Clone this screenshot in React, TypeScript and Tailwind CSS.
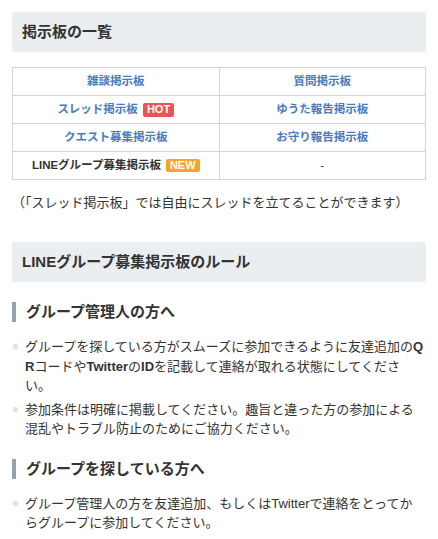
import React from "react";

const font = { fontFamily: '"Liberation Sans", "Noto Sans CJK JP", sans-serif' };

function Heading({ children }: { children: React.ReactNode }) {
  return (
    <div className="h-[40px] flex items-center pl-[10px] bg-[#ebeef1] rounded-[2px] text-[15px] font-bold text-[#333333]">
      {children}
    </div>
  );
}

function SubHeading({ children }: { children: React.ReactNode }) {
  return (
    <div className="flex items-center h-[20px]">
      <div className="w-[4px] h-[20px] bg-[#96a3ac]" />
      <div className="pl-[10px] text-[15px] font-bold text-[#333333] leading-[20px]">{children}</div>
    </div>
  );
}

function Bullet({ children }: { children: React.ReactNode }) {
  return (
    <li className="flex">
      <div className="w-[13px] shrink-0 pt-[7px] pl-[1px]">
        <div className="w-[5px] h-[5px] rounded-[1.5px] bg-[#dfe4ea]" />
      </div>
      <div className="flex-1 text-[13px] leading-[19.5px] text-[#333333]">{children}</div>
    </li>
  );
}

function Line({ children }: { children: React.ReactNode }) {
  return <span className="block whitespace-nowrap">{children}</span>;
}

function Cell({ children, plain }: { children: React.ReactNode; plain?: boolean }) {
  return (
    <td
      className={
        "w-1/2 h-[28px] border border-[#d3d3d3] text-center text-[11.5px] font-bold p-0 " +
        (plain ? "text-[#333333]" : "text-[#4a7bbf]")
      }
    >
      {children}
    </td>
  );
}

export default function App() {
  return (
    <div className="bg-white px-[12px] pt-[12px] pb-[20px] w-[438px]" style={font}>
      <Heading>掲示板の一覧</Heading>

      <table className="w-full mt-[15px] border-collapse">
        <tbody>
          <tr>
            <Cell>雑談掲示板</Cell>
            <Cell>質問掲示板</Cell>
          </tr>
          <tr>
            <Cell>
              <span className="inline-flex items-center">
                スレッド掲示板
                <span className="ml-[5px] inline-flex items-center justify-center h-[14px] px-[4px] rounded-[2px] bg-[#ec5455] text-white text-[11px] font-bold leading-none">
                  HOT
                </span>
              </span>
            </Cell>
            <Cell>ゆうた報告掲示板</Cell>
          </tr>
          <tr>
            <Cell>クエスト募集掲示板</Cell>
            <Cell>お守り報告掲示板</Cell>
          </tr>
          <tr>
            <Cell plain>
              <span className="inline-flex items-center">
                LINEグループ募集掲示板
                <span className="ml-[5px] inline-flex items-center justify-center h-[13px] px-[4px] rounded-[2px] bg-[#f5a52a] text-white text-[11px] font-bold leading-none">
                  NEW
                </span>
              </span>
            </Cell>
            <Cell plain>
              <span className="font-normal">-</span>
            </Cell>
          </tr>
        </tbody>
      </table>

      <p className="mt-[13px] text-[13px] leading-[20px] text-[#333333]">
        （「スレッド掲示板」では自由にスレッドを立てることができます）
      </p>

      <div className="mt-[29px]">
        <Heading>LINEグループ募集掲示板のルール</Heading>
      </div>

      <div className="mt-[20px]">
        <SubHeading>グループ管理人の方へ</SubHeading>
      </div>
      <ul className="mt-[15px] flex flex-col gap-[4px]">
        <Bullet>
          <Line>
            グループを探している方がスムーズに参加できるように友達追加の<strong>Q</strong>
          </Line>
          <Line>
            <strong>R</strong>コードや<strong>Twitter</strong>の<strong>ID</strong>を記載して連絡が取れる状態にしてくださ
          </Line>
          <Line>い。</Line>
        </Bullet>
        <Bullet>
          <Line>参加条件は明確に掲載してください。趣旨と違った方の参加による</Line>
          <Line>混乱やトラブル防止のためにご協力ください。</Line>
        </Bullet>
      </ul>

      <div className="mt-[20px]">
        <SubHeading>グループを探している方へ</SubHeading>
      </div>
      <ul className="mt-[15px] flex flex-col gap-[4px]">
        <Bullet>
          <Line>グループ管理人の方を友達追加、もしくはTwitterで連絡をとってか</Line>
          <Line>らグループに参加してください。</Line>
        </Bullet>
      </ul>
    </div>
  );
}
